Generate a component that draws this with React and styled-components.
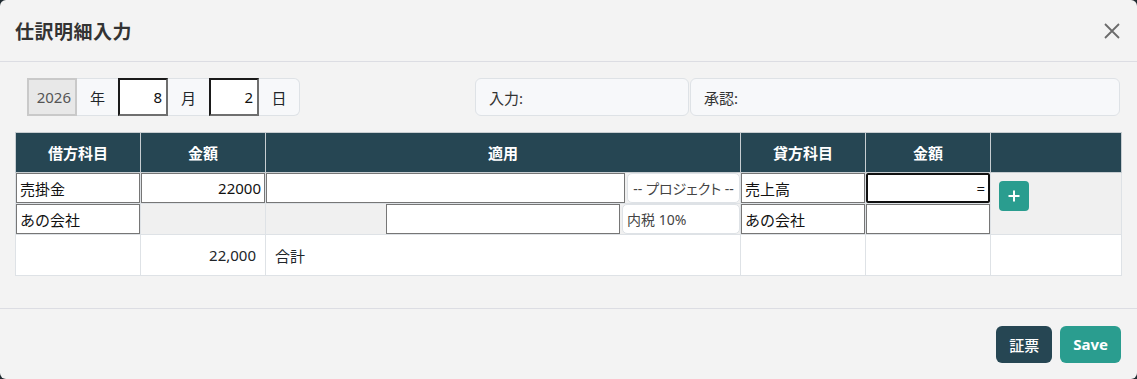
import React from "react";
import styled, { createGlobalStyle } from "styled-components";

const GlobalStyle = createGlobalStyle`
  html, body {
    margin: 0;
    padding: 0;
    background: #1f2a30;
  }
  body {
    font-family: "Noto Sans", "Noto Sans CJK JP", sans-serif;
    font-size: 15px;
    color: #212529;
  }
  * { box-sizing: border-box; }
`;

const Modal = styled.div`
  width: 1137px;
  height: 379px;
  background: #f3f3f3;
  border-radius: 6px;
  display: flex;
  flex-direction: column;
  overflow: hidden;
`;

const Header = styled.div`
  display: flex;
  align-items: center;
  justify-content: space-between;
  height: 62px;
  padding: 0 14px 0 15px;
  border-bottom: 1px solid #dcdde3;
  h2 {
    margin: 0;
    font-size: 19px;
    font-weight: 700;
    color: #333;
    letter-spacing: 0.5px;
  }
`;

const Close = styled.button`
  border: none;
  background: none;
  padding: 0;
  width: 22px;
  height: 22px;
  display: flex;
  align-items: center;
  justify-content: center;
  cursor: pointer;
`;

const Body = styled.div`
  flex: 1;
  padding: 16px 16px 0 15px;
  border-bottom: 1px solid #dcdde3;
`;

const TopRow = styled.div`
  display: flex;
  height: 38px;
  margin-bottom: 16px;
`;

const DateGroup = styled.div`
  width: 460px;
  padding-left: 12px;
  display: flex;
`;

const DateInput = styled.input`
  width: 50px;
  height: 38px;
  border: 2px solid ${(p) => (p.readOnly ? "#c9c9c9" : "#1a1a1a")};
  border-right-color: ${(p) => (p.readOnly ? "#c9c9c9" : "#6f6f6f")};
  border-bottom-color: ${(p) => (p.readOnly ? "#c9c9c9" : "#6f6f6f")};
  background: ${(p) => (p.readOnly ? "#e8e8e8" : "#fff")};
  color: ${(p) => (p.readOnly ? "#555" : "#111")};
  text-align: right;
  padding: 0 4px;
  font: inherit;
  outline: none;
`;

const Addon = styled.span`
  width: 41px;
  height: 38px;
  display: flex;
  align-items: center;
  justify-content: center;
  background: #f7f8fa;
  border: 1px solid #dee2e6;
  border-left: none;
  border-right: none;
  color: #212529;
  ${(p) => p.$last && "border-right: 1px solid #dee2e6; border-radius: 0 6px 6px 0;"}
`;

const InfoBox = styled.div`
  ${(p) => (p.$grow ? "flex: 1;" : `width: ${p.$w}px;`)}
  height: 38px;
  display: flex;
  align-items: center;
  padding: 0 13px;
  background: #f7f8fa;
  border: 1px solid #dee2e6;
  border-radius: 6px;
  margin-right: 1px;
  color: #333;
`;

const Table = styled.table`
  width: 1106px;
  border-collapse: collapse;
  table-layout: fixed;
  th {
    height: 40px;
    background: #264653;
    color: #fff;
    font-weight: 700;
    font-size: 15px;
    border: 1px solid #c7cdd1;
    padding: 0;
  }
  td {
    border: 1px solid #dee2e6;
    padding: 0;
    height: 30px;
    background: #f0f0f0;
    vertical-align: middle;
  }
  tr.total td {
    background: #fff;
    height: 41px;
  }
`;

const CellInput = styled.input`
  display: block;
  width: 100%;
  height: 30px;
  border: 1px solid #767676;
  background: #fff;
  font: inherit;
  color: #111;
  padding: 0 3px;
  text-align: ${(p) => (p.$right ? "right" : "left")};
  outline: none;
  ${(p) => p.$focus && "border: 2px solid #111; border-radius: 2px;"}
`;

const Memo = styled.div`
  display: flex;
  justify-content: flex-end;
  gap: 2px;
  height: 30px;
`;

const MemoInput = styled(CellInput)`
  width: ${(p) => p.$w}px;
  flex: none;
`;

const Select = styled.div`
  width: ${(p) => p.$w}px;
  flex: none;
  height: 30px;
  display: flex;
  align-items: center;
  justify-content: ${(p) => (p.$center ? "center" : "flex-start")};
  padding: 0 4px;
  background: #fff;
  border: 1px solid #dee2e6;
  border-radius: 5px;
  color: #444;
  font-size: 14px;
  font-feature-settings: "palt";
  white-space: nowrap;
`;

const AddCell = styled.div`
  padding: 8px 0 0 8px;
`;

const AddButton = styled.button`
  width: 30px;
  height: 30px;
  border: none;
  border-radius: 4px;
  background: #2a9d8f;
  color: #fff;
  display: flex;
  align-items: center;
  justify-content: center;
  padding: 0;
`;

const Num = styled.div`
  text-align: right;
  padding-right: 9px;
`;

const Label = styled.div`
  padding-left: 9px;
`;

const Footer = styled.div`
  height: 70px;
  display: flex;
  align-items: center;
  justify-content: flex-end;
  gap: 8px;
  padding: 0 16px 0 0;
`;

const Button = styled.button`
  height: 37px;
  padding: 0 ${(p) => p.$px}px;
  border: none;
  border-radius: 6px;
  background: ${(p) => p.$bg};
  color: #fff;
  font: inherit;
  font-weight: ${(p) => (p.$bold ? 700 : 500)};
`;

const Plus = () => (
  <svg width="14" height="14" viewBox="0 0 14 14">
    <path d="M7 1.5v11M1.5 7h11" stroke="#fff" strokeWidth="2" />
  </svg>
);

export default function App() {
  return (
    <>
      <GlobalStyle />
      <Modal>
        <Header>
          <h2>仕訳明細入力</h2>
          <Close aria-label="close">
            <svg width="18" height="18" viewBox="0 0 18 18">
              <path d="M2 2l14 14M16 2L2 16" stroke="#6b6b6b" strokeWidth="1.8" />
            </svg>
          </Close>
        </Header>
        <Body>
          <TopRow>
            <DateGroup>
              <DateInput readOnly defaultValue="2026" />
              <Addon>年</Addon>
              <DateInput defaultValue="8" />
              <Addon>月</Addon>
              <DateInput defaultValue="2" />
              <Addon $last>日</Addon>
            </DateGroup>
            <InfoBox $w={214}>入力:</InfoBox>
            <InfoBox $grow>承認:</InfoBox>
          </TopRow>
          <Table>
            <colgroup>
              <col style={{ width: 125 }} />
              <col style={{ width: 125 }} />
              <col style={{ width: 475 }} />
              <col style={{ width: 125 }} />
              <col style={{ width: 125 }} />
              <col style={{ width: 131 }} />
            </colgroup>
            <thead>
              <tr>
                <th>借方科目</th>
                <th>金額</th>
                <th>適用</th>
                <th>貸方科目</th>
                <th>金額</th>
                <th></th>
              </tr>
            </thead>
            <tbody>
              <tr>
                <td><CellInput defaultValue="売掛金" /></td>
                <td><CellInput $right defaultValue="22000" /></td>
                <td>
                  <Memo>
                    <MemoInput $w={359} />
                    <Select $w={113} $center>-- プロジェクト --</Select>
                  </Memo>
                </td>
                <td><CellInput defaultValue="売上高" /></td>
                <td><CellInput $right $focus defaultValue="=" /></td>
                <td rowSpan={2} style={{ verticalAlign: "top" }}>
                  <AddCell>
                    <AddButton aria-label="add"><Plus /></AddButton>
                  </AddCell>
                </td>
              </tr>
              <tr>
                <td><CellInput defaultValue="あの会社" /></td>
                <td></td>
                <td>
                  <Memo>
                    <MemoInput $w={234} />
                    <Select $w={118}>内税 10%</Select>
                  </Memo>
                </td>
                <td><CellInput defaultValue="あの会社" /></td>
                <td><CellInput $right /></td>
              </tr>
              <tr className="total">
                <td></td>
                <td><Num>22,000</Num></td>
                <td><Label>合計</Label></td>
                <td></td>
                <td></td>
                <td></td>
              </tr>
            </tbody>
          </Table>
        </Body>
        <Footer>
          <Button $bg="#264653" $px={13}>証票</Button>
          <Button $bg="#2a9d8f" $px={13} $bold>Save</Button>
        </Footer>
      </Modal>
    </>
  );
}
